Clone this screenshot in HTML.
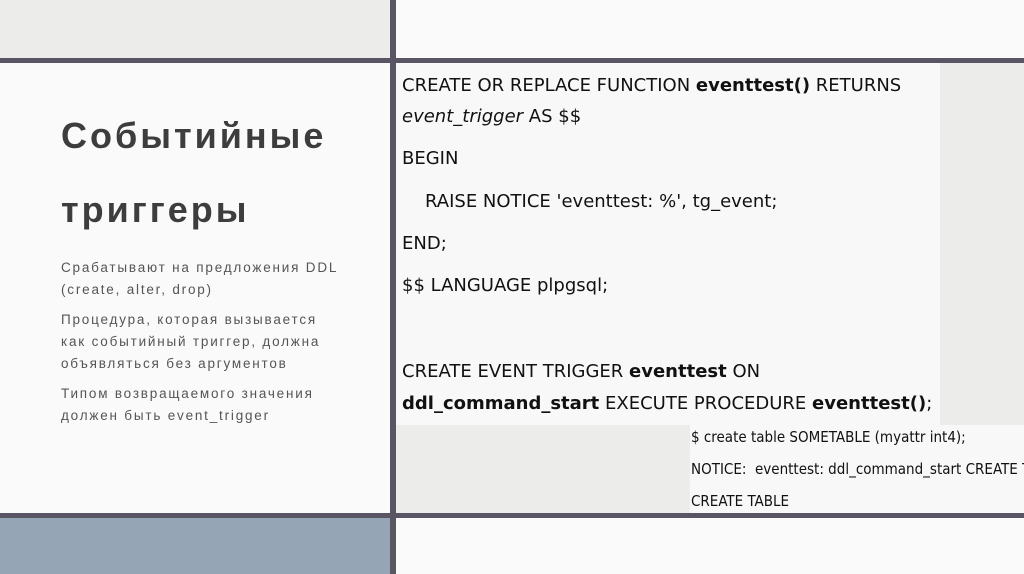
<!DOCTYPE html>
<html><head><meta charset="utf-8"><style>
*{margin:0;padding:0;box-sizing:border-box}
body{width:1024px;height:574px;position:relative;overflow:hidden;background:#fafafa;font-family:"Liberation Sans",sans-serif}
div{position:absolute}
.c{font-family:"DejaVu Sans",sans-serif;font-size:18px;color:#111;white-space:nowrap;left:402px}
.s{font-family:"DejaVu Sans Condensed","DejaVu Sans",sans-serif;font-size:15px;color:#111;white-space:nowrap;left:691px}
.b{font-size:13.5px;color:#555;letter-spacing:1.8px;line-height:22px;left:61px;width:285px}
</style></head><body>
<div style="left:0;top:0;width:390px;height:58px;background:#ecedea"></div>
<div style="left:0;top:518px;width:390px;height:56px;background:#96a5b6"></div>
<div style="left:396px;top:63px;width:544px;height:362px;background:#f8f8f8"></div>
<div style="left:940px;top:63px;width:84px;height:362px;background:#ecedea"></div>
<div style="left:396px;top:425px;width:294px;height:88px;background:#ecedea"></div>
<div style="left:690px;top:425px;width:334px;height:88px;background:#f8f8f8"></div>
<div style="left:390px;top:0;width:6px;height:574px;background:#5a5562"></div>
<div style="left:0;top:58px;width:1024px;height:5px;background:#5a5562"></div>
<div style="left:0;top:513px;width:1024px;height:5px;background:#5a5562"></div>

<div style="left:61px;top:115px;font-size:36px;font-weight:bold;color:#3d3d3d;letter-spacing:3px">Событийные</div>
<div style="left:61px;top:189px;font-size:36px;font-weight:bold;color:#3d3d3d;letter-spacing:3px">триггеры</div>
<div class="b" style="top:257px">Срабатывают на предложения DDL (create, alter, drop)</div>
<div class="b" style="top:309px">Процедура, которая вызывается как событийный триггер, должна объявляться без аргументов</div>
<div class="b" style="top:383px">Типом возвращаемого значения должен быть event_trigger</div>

<div class="c" style="top:75px">CREATE OR REPLACE FUNCTION <b>eventtest()</b> RETURNS</div>
<div class="c" style="top:106px"><i>event_trigger</i> AS $$</div>
<div class="c" style="top:148px">BEGIN</div>
<div class="c" style="top:191px;left:425px">RAISE NOTICE 'eventtest: %', tg_event;</div>
<div class="c" style="top:233px">END;</div>
<div class="c" style="top:275px">$$ LANGUAGE plpgsql;</div>
<div class="c" style="top:361px">CREATE EVENT TRIGGER <b>eventtest</b> ON</div>
<div class="c" style="top:393px"><b>ddl_command_start</b> EXECUTE PROCEDURE <b>eventtest()</b>;</div>

<div class="s" style="top:428px">$ create table SOMETABLE (myattr int4);</div>
<div class="s" style="top:460px">NOTICE:&nbsp; eventtest: ddl_command_start CREATE TABLE</div>
<div class="s" style="top:492px">CREATE TABLE</div>
</body></html>
